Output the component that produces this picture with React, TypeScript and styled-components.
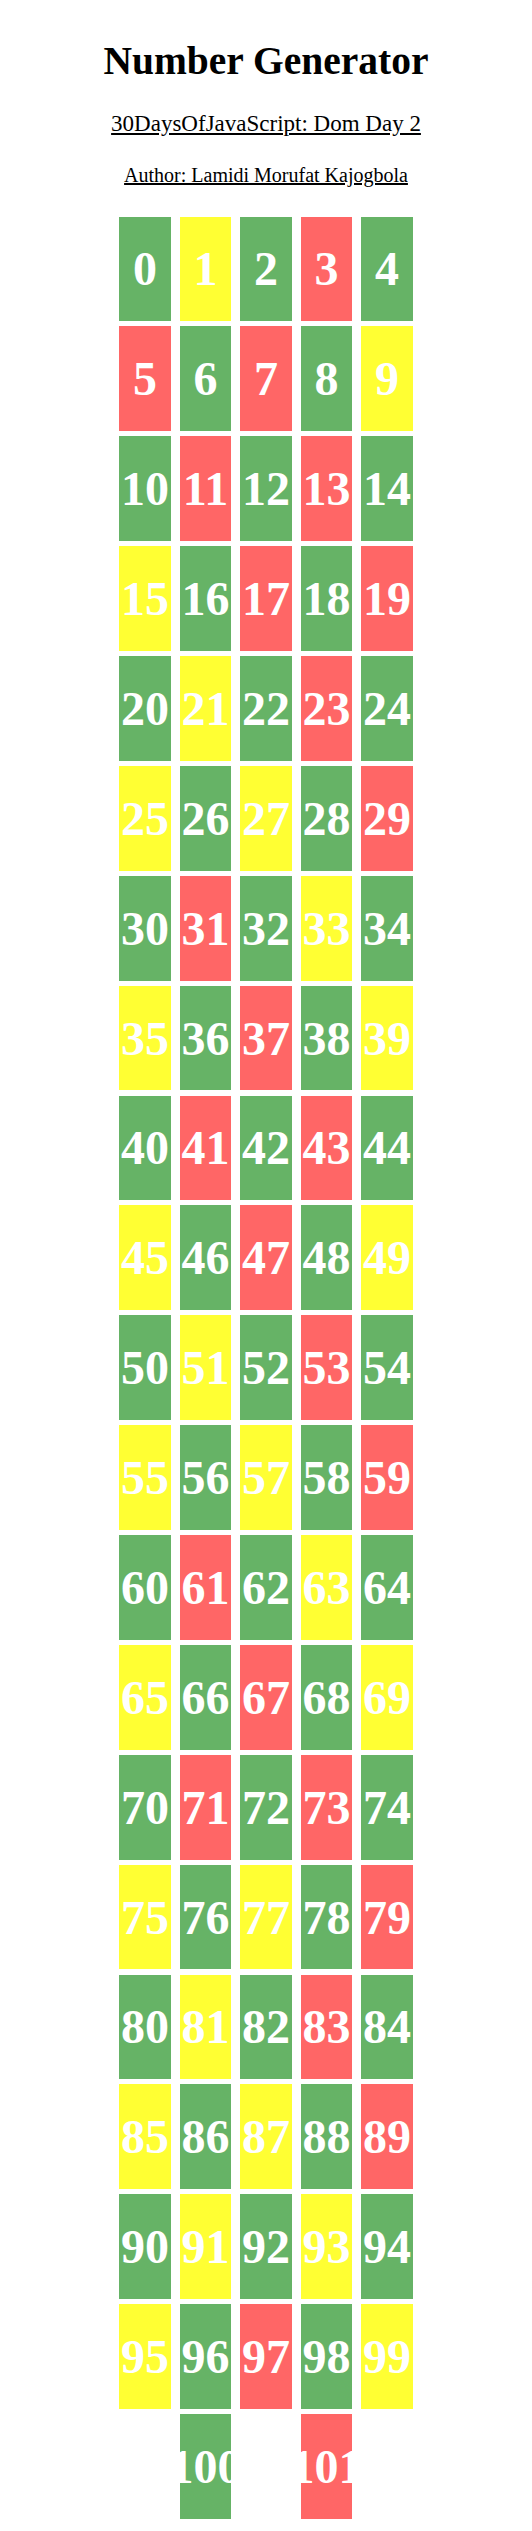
import React from 'react';
import styled, { createGlobalStyle } from 'styled-components';

const GlobalStyle = createGlobalStyle`
    body {
        margin: 0;
        background: #ffffff;
        font-family: "Liberation Serif", "Times New Roman", serif;
    }
`;

const colors = {
    even: '#66b366',
    odd: '#ffff33',
    prime: '#ff6666',
};

const Page = styled.div`
    display: flex;
    flex-direction: column;
    align-items: center;
    padding-top: 39px;
    padding-bottom: 12px;
`;

const Title = styled.h1`
    margin: 0;
    font-size: 39.5px;
    font-weight: bold;
    line-height: 45px;
    color: #000;
`;

const SubTitle = styled.h2`
    margin: 27px 0 0;
    font-size: 23px;
    font-weight: normal;
    line-height: 26px;
    text-decoration: underline;
    color: #000;
`;

const Author = styled.p`
    margin: 27px 0 0;
    font-size: 20px;
    line-height: 23px;
    text-decoration: underline;
    color: #000;
`;

const Numbers = styled.div`
    width: 306px;
    margin-top: 27px;
    display: flex;
    flex-wrap: wrap;
    justify-content: space-evenly;
`;

const NumberBox = styled.div<{ $bg: string }>`
    width: 51.6px;
    height: 104.7px;
    margin: 2.6px;
    background: ${(p) => p.$bg};
    color: #ffffff;
    font-size: 48px;
    font-weight: bold;
    display: flex;
    align-items: center;
    justify-content: center;
    overflow: hidden;
    white-space: nowrap;
`;

const isPrime = (n: number) => {
    if (n < 2) return false;
    for (let i = 2; i * i <= n; i++) {
        if (n % i === 0) return false;
    }
    return true;
};

const colorFor = (n: number) => {
    if (n % 2 === 0) return colors.even;
    if (isPrime(n)) return colors.prime;
    return colors.odd;
};

const numbers = Array.from({ length: 102 }, (_, i) => i);

const App: React.FC = () => {
    return (
        <>
            <GlobalStyle />
            <Page>
                <Title>Number Generator</Title>
                <SubTitle>30DaysOfJavaScript: Dom Day 2</SubTitle>
                <Author>Author: Lamidi Morufat Kajogbola</Author>
                <Numbers>
                    {numbers.map((n) => (
                        <NumberBox key={n} $bg={colorFor(n)}>
                            {n}
                        </NumberBox>
                    ))}
                </Numbers>
            </Page>
        </>
    );
};

export default App;
